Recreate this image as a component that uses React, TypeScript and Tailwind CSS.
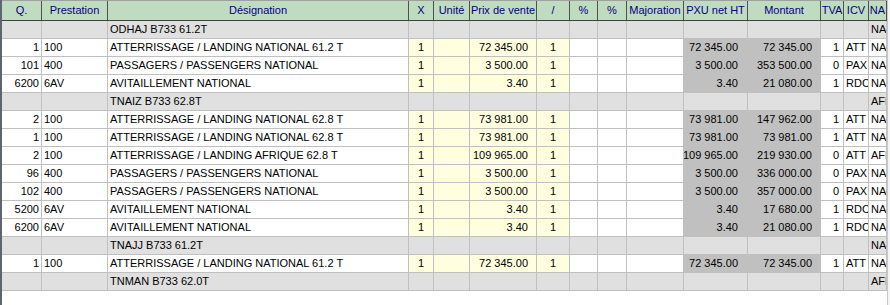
import React from "react";

type Row =
  | { kind: "group"; label: string; na: string }
  | {
      kind: "item";
      q: string;
      code: string;
      des: string;
      prix: string;
      montant: string;
      tva: string;
      icv: string;
      na: string;
    };

const rows: Row[] = [
  { kind: "group", label: "ODHAJ B733 61.2T", na: "NA" },
  { kind: "item", q: "1", code: "100", des: "ATTERRISSAGE / LANDING NATIONAL 61.2 T", prix: "72 345.00", montant: "72 345.00", tva: "1", icv: "ATT", na: "NA" },
  { kind: "item", q: "101", code: "400", des: "PASSAGERS / PASSENGERS NATIONAL", prix: "3 500.00", montant: "353 500.00", tva: "0", icv: "PAX", na: "NA" },
  { kind: "item", q: "6200", code: "6AV", des: "AVITAILLEMENT NATIONAL", prix: "3.40", montant: "21 080.00", tva: "1", icv: "RDC", na: "NA" },
  { kind: "group", label: "TNAIZ B733 62.8T", na: "AFR" },
  { kind: "item", q: "2", code: "100", des: "ATTERRISSAGE / LANDING NATIONAL 62.8 T", prix: "73 981.00", montant: "147 962.00", tva: "1", icv: "ATT", na: "NA" },
  { kind: "item", q: "1", code: "100", des: "ATTERRISSAGE / LANDING NATIONAL 62.8 T", prix: "73 981.00", montant: "73 981.00", tva: "1", icv: "ATT", na: "NA" },
  { kind: "item", q: "2", code: "100", des: "ATTERRISSAGE / LANDING AFRIQUE 62.8 T", prix: "109 965.00", montant: "219 930.00", tva: "0", icv: "ATT", na: "AFR" },
  { kind: "item", q: "96", code: "400", des: "PASSAGERS / PASSENGERS NATIONAL", prix: "3 500.00", montant: "336 000.00", tva: "0", icv: "PAX", na: "NA" },
  { kind: "item", q: "102", code: "400", des: "PASSAGERS / PASSENGERS NATIONAL", prix: "3 500.00", montant: "357 000.00", tva: "0", icv: "PAX", na: "NA" },
  { kind: "item", q: "5200", code: "6AV", des: "AVITAILLEMENT NATIONAL", prix: "3.40", montant: "17 680.00", tva: "1", icv: "RDC", na: "NA" },
  { kind: "item", q: "6200", code: "6AV", des: "AVITAILLEMENT NATIONAL", prix: "3.40", montant: "21 080.00", tva: "1", icv: "RDC", na: "NA" },
  { kind: "group", label: "TNAJJ B733 61.2T", na: "NA" },
  { kind: "item", q: "1", code: "100", des: "ATTERRISSAGE / LANDING NATIONAL 61.2 T", prix: "72 345.00", montant: "72 345.00", tva: "1", icv: "ATT", na: "NA" },
  { kind: "group", label: "TNMAN B733 62.0T", na: "AFR" },
];

const cols =
  "grid grid-cols-[40px_66px_301px_25px_36px_67px_33px_28px_29px_57px_64px_73px_23px_25px_18px]";

const headers = [
  "Q.",
  "Prestation",
  "Désignation",
  "X",
  "Unité",
  "Prix de vente",
  "/",
  "%",
  "%",
  "Majoration",
  "PXU net HT",
  "Montant",
  "TVA",
  "ICV",
  "NA",
];

function Cell({
  children,
  className = "",
}: {
  children?: React.ReactNode;
  className?: string;
}) {
  return (
    <div
      className={
        "flex h-[18px] items-center overflow-hidden whitespace-nowrap border-r border-b border-[#c0c0c0] " +
        className
      }
    >
      {children}
    </div>
  );
}

function GroupRow({ label, na }: { label: string; na: string }) {
  const g = "bg-[#e0e0e0]";
  return (
    <div className={cols}>
      <Cell className={g} />
      <Cell className={g} />
      <Cell className={g + " pl-[2px]"}>{label}</Cell>
      <Cell className={g} />
      <Cell className={g} />
      <Cell className={g} />
      <Cell className={g} />
      <Cell className={g} />
      <Cell className={g} />
      <Cell className={g} />
      <Cell className={g} />
      <Cell className={g} />
      <Cell className={g} />
      <Cell className={g} />
      <Cell className={g + " pl-[2px]"}>{na}</Cell>
    </div>
  );
}

export default function App() {
  return (
    <div className="flex h-[305px] w-[890px] overflow-hidden bg-white font-['Liberation_Sans',Arial,sans-serif] text-[11px] text-black">
      <div className="w-[2px] shrink-0 bg-[#5d6670]" />
      <div className="w-[885px] shrink-0">
        <div className={cols + " h-[21px] border-t border-b border-t-[#a0a0a0] border-b-[#404040] bg-[#c0dcc0] text-[#000080]"}>
          {headers.map((h, i) => (
            <div
              key={i}
              className="flex items-center justify-center overflow-hidden whitespace-nowrap border-r border-[#505050]"
            >
              {h}
            </div>
          ))}
        </div>
        {rows.map((r, i) =>
          r.kind === "group" ? (
            <GroupRow key={i} label={r.label} na={r.na} />
          ) : (
            <div key={i} className={cols}>
              <Cell className="justify-end pr-[2px]">{r.q}</Cell>
              <Cell className="pl-[2px]">{r.code}</Cell>
              <Cell className="pl-[2px]">{r.des}</Cell>
              <Cell className="justify-center bg-[#ffffe0]">1</Cell>
              <Cell className="bg-[#ffffe0]" />
              <Cell className="justify-end bg-[#ffffe0] pr-[8px]">{r.prix}</Cell>
              <Cell className="justify-center bg-[#ffffe0]">1</Cell>
              <Cell />
              <Cell />
              <Cell />
              <Cell className="justify-end bg-[#c0c0c0] pr-[9px]">{r.prix}</Cell>
              <Cell className="justify-end bg-[#c0c0c0] pr-[8px]">{r.montant}</Cell>
              <Cell className="justify-end pr-[4px]">{r.tva}</Cell>
              <Cell className="pl-[2px]">{r.icv}</Cell>
              <Cell className="pl-[2px]">{r.na}</Cell>
            </div>
          )
        )}
      </div>
      <div className="w-[3px] shrink-0 border-l border-[#c8c8c8] bg-[#f4f4f4]" />
    </div>
  );
}
